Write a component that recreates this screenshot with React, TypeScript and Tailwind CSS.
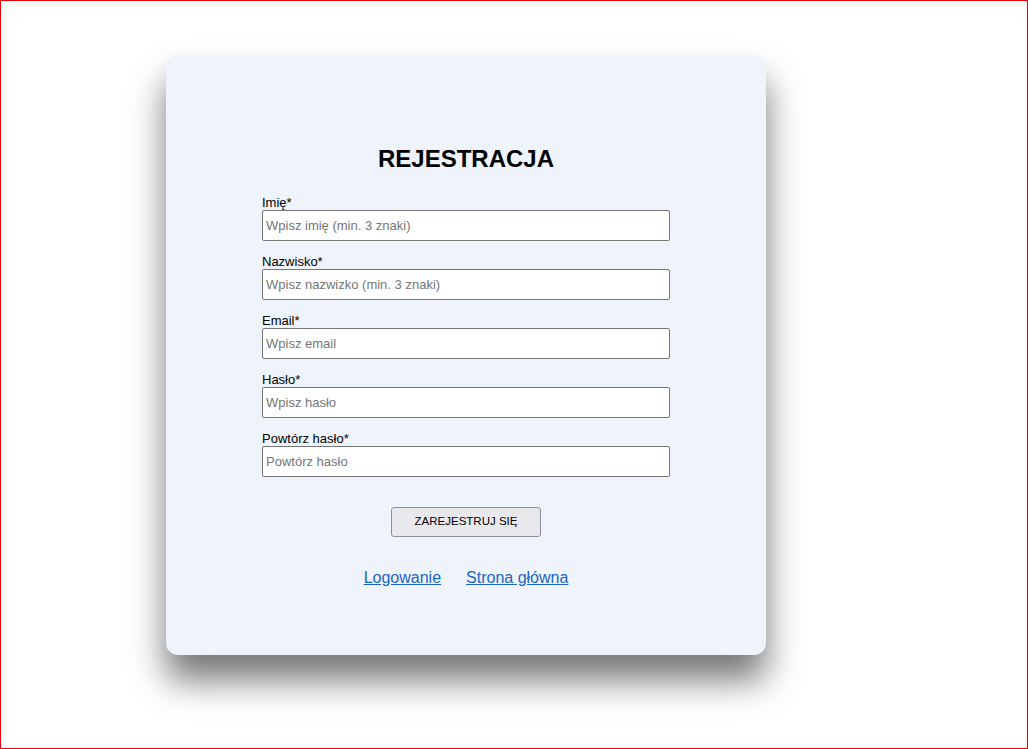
const fields = [
  { label: "Imię*", placeholder: "Wpisz imię (min. 3 znaki)", type: "text" },
  { label: "Nazwisko*", placeholder: "Wpisz nazwizko (min. 3 znaki)", type: "text" },
  { label: "Email*", placeholder: "Wpisz email", type: "email" },
  { label: "Hasło*", placeholder: "Wpisz hasło", type: "password" },
  { label: "Powtórz hasło*", placeholder: "Powtórz hasło", type: "password" },
];

export default function App() {
  return (
    <div className="h-screen overflow-hidden border border-red-600 bg-white pl-[165px] pt-[54px] font-['Liberation_Sans',Arial,sans-serif] text-black">
      {/* registration card */}
      <div className="flex h-[600px] w-[600px] flex-col items-center rounded-xl bg-[#eff3fb] pt-[86px] shadow-[0_25px_35px_#777]">
        <h2 className="text-[24px] font-bold leading-normal">REJESTRACJA</h2>

        <form className="mt-[22px] flex w-[408px] flex-col gap-[17px]" onSubmit={(e) => e.preventDefault()}>
          {fields.map((f) => (
            <div key={f.label} className="flex flex-col">
              <label className="pb-[4px] text-[13px] leading-[7px]">{f.label}</label>
              <input
                type={f.type}
                placeholder={f.placeholder}
                className="h-[31px] w-full rounded-[2px] border border-[#767676] bg-white px-[3px] text-[13px] outline-none placeholder:text-[#757575]"
              />
            </div>
          ))}
        </form>

        <button className="mt-[30px] h-[30px] w-[150px] rounded-[3px] border border-[#8f8f9d] bg-[#e9e9ed] text-[11.5px] leading-none">
          ZAREJESTRUJ SIĘ
        </button>

        <div className="mt-[29px] flex gap-[25px] text-[16px] leading-normal">
          <a href="#" className="text-[#1a66c2] underline">Logowanie</a>
          <a href="#" className="text-[#1a66c2] underline">Strona główna</a>
        </div>
      </div>
    </div>
  );
}
